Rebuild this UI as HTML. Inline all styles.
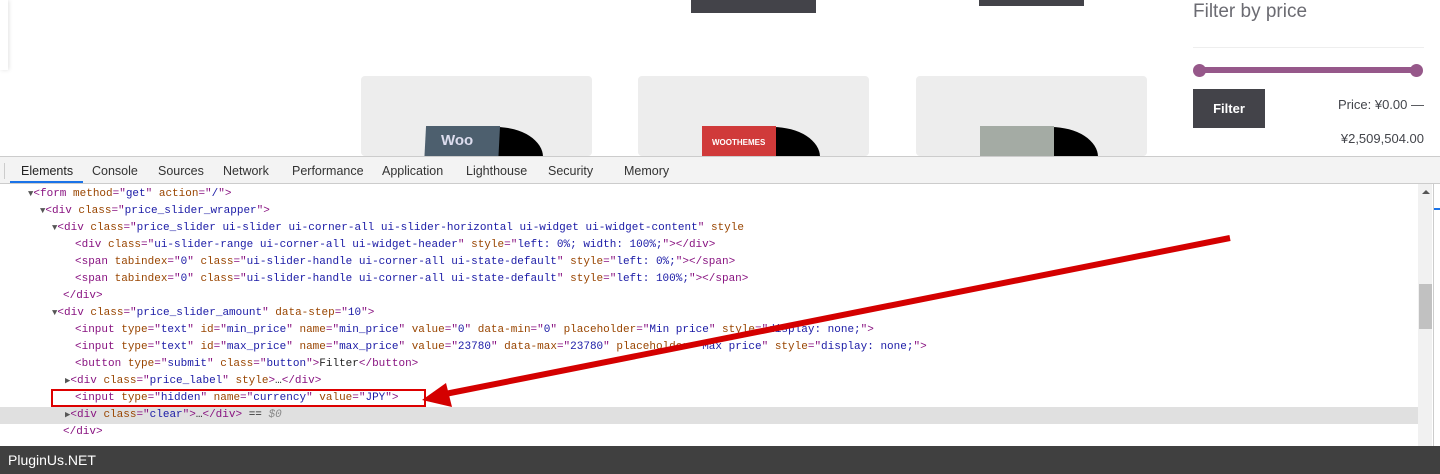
<!DOCTYPE html>
<html><head><meta charset="utf-8"><style>
*{margin:0;padding:0;box-sizing:border-box}
body{width:1440px;height:474px;overflow:hidden;background:#fff;font-family:"Liberation Sans",sans-serif;position:relative}
.abs{position:absolute}
.card{position:absolute;top:76px;width:231px;height:80px;background:#ededed;border-radius:4px;overflow:hidden}
.tabs{position:absolute;left:0;top:156px;width:1440px;height:28px;background:#f3f3f3;border-top:1px solid #ccc;border-bottom:1px solid #ccc;font-size:12.5px;color:#333}
.tabs span{position:absolute;top:7px}
.code{position:absolute;left:0;top:186px;width:1418px;font-family:"Liberation Mono",monospace;font-size:11px;color:#222}
.l{height:17px;line-height:17px;white-space:pre}
.t{color:#881280}.a{color:#994500}.v{color:#1a1aa6}
.tri{color:#555;font-size:9px}
</style></head><body>
<div class="abs" style="left:0;top:0;width:8px;height:70px;box-shadow:1px 0 4px rgba(0,0,0,.12)"></div>
<div class="abs" style="left:691px;top:0;width:125px;height:13px;background:#434349"></div>
<div class="abs" style="left:979px;top:0;width:105px;height:6px;background:#434349"></div>
<div class="card" style="left:361px"><div class="abs" style="left:88px;top:51px;width:94px;height:60px;background:#000;border-radius:50%"></div><div class="abs" style="left:64px;top:50px;width:74px;height:40px;background:#4d5f6e;transform:skewX(-3deg)"></div><div class="abs" style="left:80px;top:56px;color:#dde;font-size:15px;font-weight:bold">Woo</div></div>
<div class="card" style="left:638px"><div class="abs" style="left:88px;top:51px;width:94px;height:60px;background:#000;border-radius:50%"></div><div class="abs" style="left:64px;top:50px;width:74px;height:40px;background:#d03a3a"></div><div class="abs" style="left:74px;top:62px;color:#fff;font-size:8px;font-weight:bold">WOOTHEMES</div></div>
<div class="card" style="left:916px"><div class="abs" style="left:88px;top:51px;width:94px;height:60px;background:#000;border-radius:50%"></div><div class="abs" style="left:64px;top:50px;width:74px;height:40px;background:#a4aba4"></div></div>
<div class="abs" style="left:1193px;top:1px;font-size:19px;color:#6b6b72">Filter by price</div>
<div class="abs" style="left:1193px;top:47px;width:231px;height:1px;background:#eee"></div>
<div class="abs" style="left:1198px;top:67px;width:218px;height:6px;background:#96588a"></div>
<div class="abs" style="left:1193px;top:64px;width:13px;height:13px;border-radius:50%;background:#96588a"></div>
<div class="abs" style="left:1410px;top:64px;width:13px;height:13px;border-radius:50%;background:#96588a"></div>
<div class="abs" style="left:1193px;top:89px;width:72px;height:39px;background:#434349;color:#fff;font-weight:bold;font-size:13px;text-align:center;line-height:39px">Filter</div>
<div class="abs" style="left:1300px;top:97px;width:124px;text-align:right;font-size:13px;color:#43454b">Price: ¥0.00 —</div>
<div class="abs" style="left:1300px;top:131px;width:124px;text-align:right;font-size:13px;color:#43454b">¥2,509,504.00</div>
<div class="tabs">
<div class="abs" style="left:4px;top:6px;width:1px;height:16px;background:#ccc"></div>
<span style="left:21px;color:#222">Elements</span><div class="abs" style="left:10px;top:24px;width:73px;height:2px;background:#1a73e8"></div>
<span style="left:92px">Console</span><span style="left:158px">Sources</span><span style="left:223px">Network</span><span style="left:292px">Performance</span><span style="left:382px">Application</span><span style="left:466px">Lighthouse</span><span style="left:548px">Security</span><span style="left:624px">Memory</span>
</div>
<div class="code">
<div class="l" style="padding-left:28px"><span class="tri">▼</span><span class="t">&lt;form </span><span class="a">method</span><span class="t">="</span><span class="v">get</span><span class="t">" </span><span class="a">action</span><span class="t">="</span><span class="v">/</span><span class="t">"&gt;</span></div>
<div class="l" style="padding-left:40px"><span class="tri">▼</span><span class="t">&lt;div </span><span class="a">class</span><span class="t">="</span><span class="v">price_slider_wrapper</span><span class="t">"&gt;</span></div>
<div class="l" style="padding-left:52px"><span class="tri">▼</span><span class="t">&lt;div </span><span class="a">class</span><span class="t">="</span><span class="v">price_slider ui-slider ui-corner-all ui-slider-horizontal ui-widget ui-widget-content</span><span class="t">" </span><span class="a">style</span></div>
<div class="l" style="padding-left:75px"><span class="t">&lt;div </span><span class="a">class</span><span class="t">="</span><span class="v">ui-slider-range ui-corner-all ui-widget-header</span><span class="t">" </span><span class="a">style</span><span class="t">="</span><span class="v">left: 0%; width: 100%;</span><span class="t">"&gt;&lt;/div&gt;</span></div>
<div class="l" style="padding-left:75px"><span class="t">&lt;span </span><span class="a">tabindex</span><span class="t">="</span><span class="v">0</span><span class="t">" </span><span class="a">class</span><span class="t">="</span><span class="v">ui-slider-handle ui-corner-all ui-state-default</span><span class="t">" </span><span class="a">style</span><span class="t">="</span><span class="v">left: 0%;</span><span class="t">"&gt;&lt;/span&gt;</span></div>
<div class="l" style="padding-left:75px"><span class="t">&lt;span </span><span class="a">tabindex</span><span class="t">="</span><span class="v">0</span><span class="t">" </span><span class="a">class</span><span class="t">="</span><span class="v">ui-slider-handle ui-corner-all ui-state-default</span><span class="t">" </span><span class="a">style</span><span class="t">="</span><span class="v">left: 100%;</span><span class="t">"&gt;&lt;/span&gt;</span></div>
<div class="l" style="padding-left:63px"><span class="t">&lt;/div&gt;</span></div>
<div class="l" style="padding-left:52px"><span class="tri">▼</span><span class="t">&lt;div </span><span class="a">class</span><span class="t">="</span><span class="v">price_slider_amount</span><span class="t">" </span><span class="a">data-step</span><span class="t">="</span><span class="v">10</span><span class="t">"&gt;</span></div>
<div class="l" style="padding-left:75px"><span class="t">&lt;input </span><span class="a">type</span><span class="t">="</span><span class="v">text</span><span class="t">" </span><span class="a">id</span><span class="t">="</span><span class="v">min_price</span><span class="t">" </span><span class="a">name</span><span class="t">="</span><span class="v">min_price</span><span class="t">" </span><span class="a">value</span><span class="t">="</span><span class="v">0</span><span class="t">" </span><span class="a">data-min</span><span class="t">="</span><span class="v">0</span><span class="t">" </span><span class="a">placeholder</span><span class="t">="</span><span class="v">Min price</span><span class="t">" </span><span class="a">style</span><span class="t">="</span><span class="v">display: none;</span><span class="t">"&gt;</span></div>
<div class="l" style="padding-left:75px"><span class="t">&lt;input </span><span class="a">type</span><span class="t">="</span><span class="v">text</span><span class="t">" </span><span class="a">id</span><span class="t">="</span><span class="v">max_price</span><span class="t">" </span><span class="a">name</span><span class="t">="</span><span class="v">max_price</span><span class="t">" </span><span class="a">value</span><span class="t">="</span><span class="v">23780</span><span class="t">" </span><span class="a">data-max</span><span class="t">="</span><span class="v">23780</span><span class="t">" </span><span class="a">placeholder</span><span class="t">="</span><span class="v">Max price</span><span class="t">" </span><span class="a">style</span><span class="t">="</span><span class="v">display: none;</span><span class="t">"&gt;</span></div>
<div class="l" style="padding-left:75px"><span class="t">&lt;button </span><span class="a">type</span><span class="t">="</span><span class="v">submit</span><span class="t">" </span><span class="a">class</span><span class="t">="</span><span class="v">button</span><span class="t">"&gt;</span>Filter<span class="t">&lt;/button&gt;</span></div>
<div class="l" style="padding-left:65px"><span class="tri">▶</span><span class="t">&lt;div </span><span class="a">class</span><span class="t">="</span><span class="v">price_label</span><span class="t">" </span><span class="a">style</span><span class="t">&gt;</span>…<span class="t">&lt;/div&gt;</span></div>
<div class="l" style="padding-left:75px"><span class="t">&lt;input </span><span class="a">type</span><span class="t">="</span><span class="v">hidden</span><span class="t">" </span><span class="a">name</span><span class="t">="</span><span class="v">currency</span><span class="t">" </span><span class="a">value</span><span class="t">="</span><span class="v">JPY</span><span class="t">"&gt;</span></div>
<div class="l" style="padding-left:65px;background:#e0e0e0"><span class="tri">▶</span><span class="t">&lt;div </span><span class="a">class</span><span class="t">="</span><span class="v">clear</span><span class="t">"&gt;</span>…<span class="t">&lt;/div&gt;</span> == <i style="color:#888">$0</i></div>
<div class="l" style="padding-left:63px"><span class="t">&lt;/div&gt;</span></div>
</div>
<div class="abs" style="left:51px;top:389px;width:375px;height:18px;border:2px solid #d00"></div>
<div class="abs" style="left:1418px;top:184px;width:14px;height:262px;background:#f1f1f1"></div>
<div class="abs" style="left:1419px;top:284px;width:13px;height:45px;background:#c1c1c1"></div>
<div class="abs" style="left:1422px;top:190px;width:0;height:0;border-left:4px solid transparent;border-right:4px solid transparent;border-bottom:4px solid #555"></div>
<div class="abs" style="left:1433px;top:184px;width:7px;height:262px;background:#fff;border-left:1px solid #ccc"></div>
<div class="abs" style="left:1434px;top:208px;width:6px;height:2px;background:#1a73e8"></div>
<svg class="abs" style="left:0;top:0" width="1440" height="474"><line x1="1230" y1="238" x2="440" y2="395" stroke="#d40000" stroke-width="6"/><polygon points="422,400 446,383 452,407" fill="#d40000"/></svg>
<div class="abs" style="left:0;top:446px;width:1440px;height:28px;background:#404040;color:#fff;font-size:14px;line-height:28px;padding-left:8px">PluginUs.NET</div>
</body></html>
